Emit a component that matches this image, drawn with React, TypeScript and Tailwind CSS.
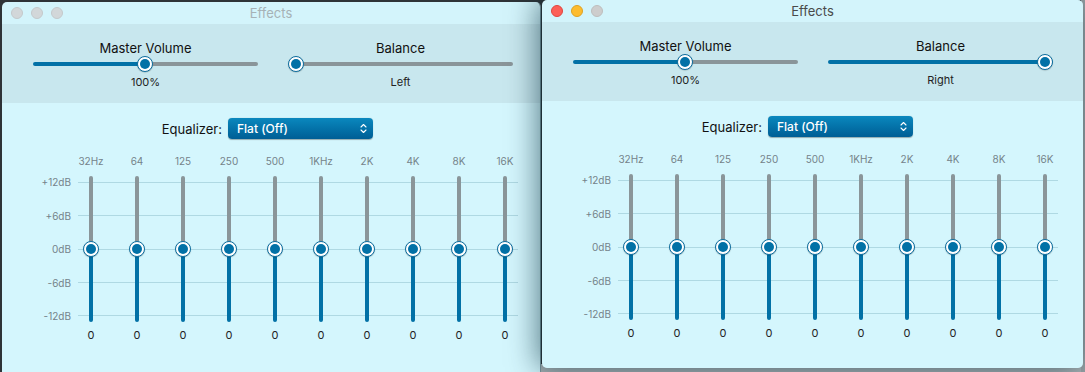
import React from "react";

const FREQS = ["32Hz", "64", "125", "250", "500", "1KHz", "2K", "4K", "8K", "16K"];
const DBS = ["+12dB", "+6dB", "0dB", "-6dB", "-12dB"];

function Thumb({ className = "" }: { className?: string }) {
  return (
    <div
      className={`absolute flex h-[16px] w-[16px] items-center justify-center rounded-full border-[1.5px] border-[#0a6d9f] bg-white shadow-[0_0.5px_1px_rgba(0,0,0,0.25)] ${className}`}
    >
      <div className="h-[9.5px] w-[9.5px] rounded-full bg-[#0271a6]" />
    </div>
  );
}

function HSlider({ mode }: { mode: "mid" | "left" | "right" }) {
  return (
    <div className="relative flex h-[16px] w-[225px] items-center">
      {mode === "mid" && (
        <div className="flex h-[4px] w-full overflow-hidden rounded-full">
          <div className="h-full w-1/2 bg-[#0271a6]" />
          <div className="h-full w-1/2 bg-[#8a9599]" />
        </div>
      )}
      {mode === "left" && <div className="ml-[2px] h-[4px] flex-1 rounded-full bg-[#8a9599]" />}
      {mode === "right" && <div className="h-[4px] flex-1 rounded-full bg-[#0271a6]" />}
      {mode === "mid" && <Thumb className="left-[104px] top-0" />}
      {mode === "left" && <Thumb className="left-0 top-0" />}
      {mode === "right" && <Thumb className="right-0 top-0" />}
    </div>
  );
}

function VSlider() {
  return (
    <div className="relative flex h-[146px] w-[16px] justify-center">
      <div className="flex h-full w-[4px] flex-col overflow-hidden rounded-full">
        <div className="flex-1 bg-[#8a9599]" />
        <div className="flex-1 bg-[#0271a6]" />
      </div>
      <Thumb className="left-0 top-[65px]" />
    </div>
  );
}

function Window({ active, balance }: { active: boolean; balance: "left" | "right" }) {
  return (
    <div className="flex h-full w-full flex-col">
      <div className="grid h-[22px] grid-cols-[1fr_auto_1fr] items-center bg-[#d3f4fb]">
        <div className="flex items-center gap-[8px] pl-[9px]">
          {active ? (
            <>
              <div className="h-[12px] w-[12px] rounded-full border-[0.5px] border-[#e0443e] bg-[#fc5f57]" />
              <div className="h-[12px] w-[12px] rounded-full border-[0.5px] border-[#dea123] bg-[#fdbc2e]" />
              <div className="h-[12px] w-[12px] rounded-full border-[0.5px] border-[#bdbdbd] bg-[#cdcdcd]" />
            </>
          ) : (
            <>
              <div className="h-[12px] w-[12px] rounded-full border-[0.5px] border-[#c3c9cb] bg-[#d2d7d9]" />
              <div className="h-[12px] w-[12px] rounded-full border-[0.5px] border-[#c3c9cb] bg-[#d2d7d9]" />
              <div className="h-[12px] w-[12px] rounded-full border-[0.5px] border-[#c3c9cb] bg-[#d2d7d9]" />
            </>
          )}
        </div>
        <div className={`text-[13px] leading-[16px] ${active ? "text-[#4a4a4a]" : "text-[#a6b2b6]"}`}>Effects</div>
        <div />
      </div>

      <div className="flex h-[79px] gap-[30px] bg-[#c8e7ee] pl-[31px] pt-[16px]">
        <div className="flex w-[225px] flex-col items-center">
          <div className="text-[13px] leading-[16px] text-[#111]">Master Volume</div>
          <HSlider mode="mid" />
          <div className="mt-[4px] text-[11px] leading-[13px] text-[#222]">100%</div>
        </div>
        <div className="flex w-[225px] flex-col items-center">
          <div className="text-[13px] leading-[16px] text-[#111]">Balance</div>
          <HSlider mode={balance} />
          <div className="mt-[4px] text-[11px] leading-[13px] text-[#222]">{balance === "left" ? "Left" : "Right"}</div>
        </div>
      </div>

      <div className="flex flex-1 flex-col bg-[#d4f6fd] pt-[15px]">
        <div className="flex h-[21px] items-center">
          <div className="w-[220px] text-right text-[13px] leading-[16px] text-[#111]">Equalizer:</div>
          <div className="ml-[6px] flex h-[21px] w-[145px] items-center justify-between rounded-[4px] bg-gradient-to-b from-[#0b88be] to-[#005e95] pl-[9px] pr-[6px] shadow-[0_0.5px_1px_rgba(0,0,0,0.3)]">
            <span className="text-[12px] font-medium leading-[14px] text-white">Flat (Off)</span>
            <svg width="7" height="11" viewBox="0 0 7 11" fill="none" stroke="white" strokeWidth="1.1" strokeLinecap="round" strokeLinejoin="round">
              <path d="M1 4 L3.5 1.5 L6 4" />
              <path d="M1 7 L3.5 9.5 L6 7" />
            </svg>
          </div>
        </div>

        <div className="mt-[16px] flex">
          <div className="ml-[20px] flex w-[49px] flex-col pt-[21px]">
            <div className="flex h-[146px] flex-col justify-between">
              {DBS.map((d) => (
                <div key={d} className="text-right text-[10px] leading-[12px] text-[#74838a]">
                  {d}
                </div>
              ))}
            </div>
          </div>
          <div className="relative flex gap-[6px]">
            <div className="absolute left-[7px] right-[7px] top-[27px] flex h-[134px] flex-col justify-between">
              {DBS.map((d) => (
                <div key={d} className="h-[1px] w-full bg-[#afd9e3]" />
              ))}
            </div>
            {FREQS.map((f) => (
              <div key={f} className="relative flex w-[40px] flex-col items-center">
                <div className="text-[10px] leading-[12px] text-[#74838a]">{f}</div>
                <div className="mt-[9px]">
                  <VSlider />
                </div>
                <div className="mt-[7px] text-[11px] leading-[13px] text-[#222]">0</div>
              </div>
            ))}
          </div>
        </div>
      </div>
    </div>
  );
}

export default function App() {
  return (
    <div
      className="relative h-[372px] w-[1085px] overflow-hidden bg-[#2e3337]"
      style={{ fontFamily: "Inter, 'Noto Sans', 'Liberation Sans', sans-serif" }}
    >
      <div className="absolute bottom-0 right-0 h-[8px] w-[544px] bg-[#a9b1b4]" />
      <div className="absolute right-0 top-0 h-full w-[4px] bg-[#9aa3a6]" />
      <div className="absolute left-[2px] top-[2px] h-[380px] w-[539px] overflow-hidden rounded-t-[5px] border-r border-[#7d979e]">
        <Window active={false} balance="left" />
      </div>
      <div className="absolute left-[542px] top-0 h-[368px] w-[541px] overflow-hidden rounded-[5px] shadow-[-4px_0_30px_rgba(0,40,55,0.6)]">
        <Window active={true} balance="right" />
      </div>
    </div>
  );
}
